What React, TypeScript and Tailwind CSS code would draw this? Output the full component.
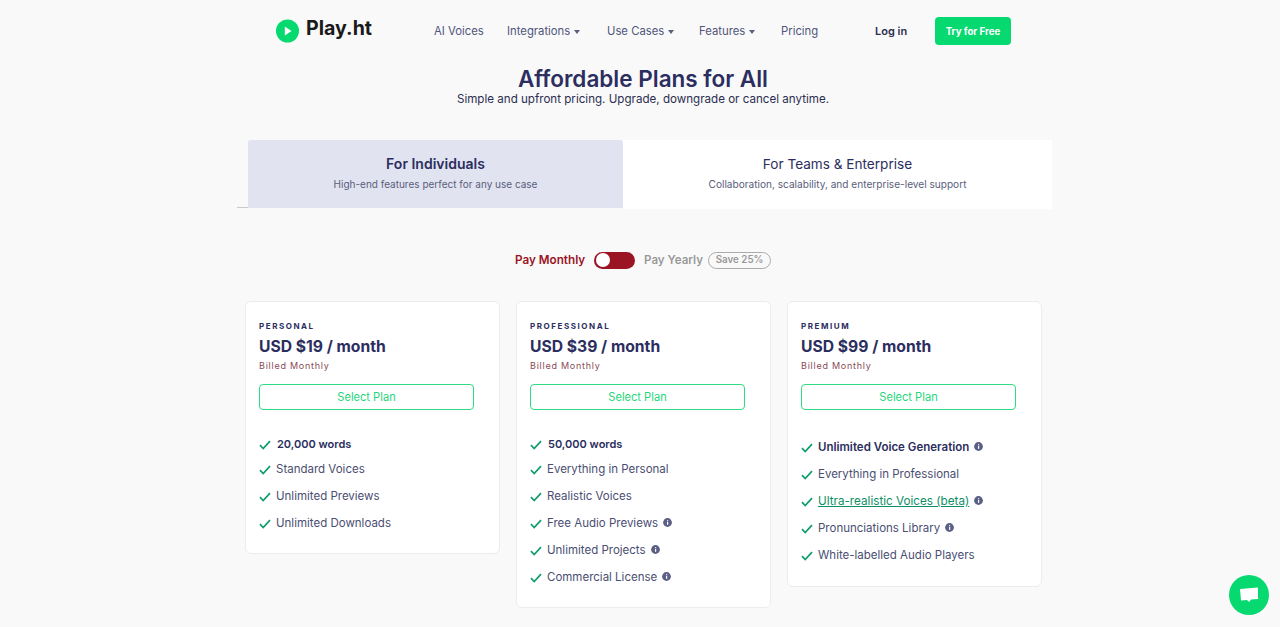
import React from "react";

function Caret() {
  return <span className="ml-[4px] mt-[2px] inline-block h-0 w-0 border-x-[3.5px] border-t-[4px] border-x-transparent border-t-[#5a5f7d]" />;
}

function Check() {
  return (
    <svg width="12" height="10" viewBox="0 0 12 10" fill="none" className="shrink-0">
      <path d="M1 5.2 L4.2 8.6 L11 1.2" stroke="#0f9d6b" strokeWidth="1.7" />
    </svg>
  );
}

function Info() {
  return (
    <svg width="9" height="9" viewBox="0 0 9 9" className="ml-[5px] mb-[2px] shrink-0">
      <circle cx="4.5" cy="4.5" r="4.4" fill="#5b5f85" />
      <rect x="4" y="4" width="1.2" height="2.8" fill="#fff" />
      <rect x="4" y="2.2" width="1.2" height="1.1" fill="#fff" />
    </svg>
  );
}

type Feature = { t: string; bold?: boolean; info?: boolean; link?: boolean; first?: boolean };
type Plan = { name: string; price: string; features: Feature[]; list: string; pad: string };

const plans: Plan[] = [
  {
    name: "PERSONAL",
    price: "USD $19 / month",
    list: "pt-[26px]",
    pad: "pb-[21px]",
    features: [
      { t: "20,000 words", bold: true, first: true },
      { t: "Standard Voices" },
      { t: "Unlimited Previews" },
      { t: "Unlimited Downloads" },
    ],
  },
  {
    name: "PROFESSIONAL",
    price: "USD $39 / month",
    list: "pt-[26px]",
    pad: "pb-[21px]",
    features: [
      { t: "50,000 words", bold: true, first: true },
      { t: "Everything in Personal" },
      { t: "Realistic Voices" },
      { t: "Free Audio Previews", info: true },
      { t: "Unlimited Projects", info: true },
      { t: "Commercial License", info: true },
    ],
  },
  {
    name: "PREMIUM",
    price: "USD $99 / month",
    list: "pt-[29px]",
    pad: "pb-[22px]",
    features: [
      { t: "Unlimited Voice Generation", bold: true, info: true },
      { t: "Everything in Professional" },
      { t: "Ultra-realistic Voices (beta)", info: true, link: true },
      { t: "Pronunciations Library", info: true },
      { t: "White-labelled Audio Players" },
    ],
  },
];

function Card({ plan }: { plan: Plan }) {
  return (
    <div className={`w-[255px] rounded-[6px] border border-[#ececf0] bg-white pl-[13px] pr-[25px] pt-[19px] ${plan.pad}`}>
      <div className="text-[8px] font-bold leading-[10px] tracking-[1.55px] text-[#2b2e5e]">{plan.name}</div>
      <div className="mt-[5px] text-[15.7px] font-bold leading-[22px] text-[#2b2e5e]">{plan.price}</div>
      <div className="mt-[1px] text-[9px] leading-[14px] tracking-[0.75px] text-[#8a4a55]">Billed Monthly</div>
      <div className="mt-[11px] flex h-[26px] w-[215px] items-center justify-center rounded-[4px] border border-[#2fdc85] text-[11.1px] text-[#1fd67c]">
        Select Plan
      </div>
      <ul className={`flex flex-col gap-[10px] ${plan.list}`}>
        {plan.features.map((f) => (
          <li key={f.t} className={f.first ? "-mb-[2px] flex h-[17px] items-center" : "flex h-[17px] items-center"}>
            <Check />
            <span
              className={
                f.first
                  ? "ml-[6px] whitespace-nowrap text-[11px] font-semibold leading-[17px] text-[#2b2e5e]"
                  : f.bold
                  ? "ml-[5px] whitespace-nowrap text-[11.5px] font-semibold leading-[17px] text-[#2b2e5e]"
                  : f.link
                  ? "ml-[5px] whitespace-nowrap text-[11.7px] leading-[17px] text-[#0f8f66] underline"
                  : "ml-[5px] whitespace-nowrap text-[11.5px] leading-[17px] text-[#4a4e72]"
              }
            >
              {f.t}
            </span>
            {f.info && <Info />}
          </li>
        ))}
      </ul>
    </div>
  );
}

export default function App() {
  return (
    <div className="h-[627px] overflow-hidden bg-[#f9f9fa] font-['Inter','Noto_Sans',sans-serif]">
      <nav className="flex h-[62px] items-center pl-[276px]">
        <div className="flex w-[158px] items-center">
          <svg width="24" height="24" viewBox="0 0 24 24" className="shrink-0">
            <circle cx="11.5" cy="12" r="11.5" fill="#05d96f" />
            <path d="M8.8 7.5 L15.5 12 L8.8 16.5 Z" fill="#fff" />
          </svg>
          <span className="mb-[4px] ml-[6px] text-[19.6px] font-bold text-[#1a1a1a]">Play.ht</span>
        </div>
        <div className="flex items-center text-[11.3px] text-[#50557a]">
          <span className="w-[73px]">AI Voices</span>
          <span className="flex w-[100px] items-center">Integrations<Caret /></span>
          <span className="flex w-[92px] items-center">Use Cases<Caret /></span>
          <span className="flex w-[82px] items-center">Features<Caret /></span>
          <span className="w-[94px]">Pricing</span>
        </div>
        <span className="w-[60px] text-[11px] font-semibold text-[#2b2e4f]">Log in</span>
        <div className="flex h-[28px] w-[76px] items-center justify-center rounded-[4px] bg-[#05d96f] pt-[2px] text-[9.7px] font-bold text-white">
          Try for Free
        </div>
      </nav>

      <div className="flex h-[43px] flex-col items-center pl-[6px] pt-[1px]">
        <h1 className="text-[22.5px] font-semibold leading-[31px] text-[#2b2e5e]">Affordable Plans for All</h1>
        <p className="text-[11.6px] leading-[10px] text-[#2b2e4f]">Simple and upfront pricing. Upgrade, downgrade or cancel anytime.</p>
      </div>

      <div className="mt-[35px] flex pl-[237px]">
        <div className="h-[68px] w-[11px] border-b border-[#c9c9cc]" />
        <div className="flex h-[68px] w-[375px] flex-col items-center rounded-t-[3px] bg-[#e1e3f0] pt-[14px]">
          <div className="text-[14px] font-semibold leading-[20px] text-[#2b2e5e]">For Individuals</div>
          <div className="mt-[2px] text-[10px] leading-[16px] text-[#5a5e7c]">High-end features perfect for any use case</div>
        </div>
        <div className="flex h-[69px] w-[429px] flex-col items-center bg-white pt-[14px]">
          <div className="text-[13.6px] leading-[20px] text-[#2b2e5e]">For Teams &amp; Enterprise</div>
          <div className="mt-[2px] text-[10.1px] leading-[16px] text-[#5a5e7c]">Collaboration, scalability, and enterprise-level support</div>
        </div>
      </div>

      <div className="mt-[41px] flex h-[20px] items-center pl-[515px]">
        <span className="w-[79px] whitespace-nowrap pt-[2px] text-[11.7px] font-semibold text-[#9b1424]">Pay Monthly</span>
        <div className="flex h-[17px] w-[41px] items-center rounded-full bg-[#9b1424] pl-[2px]">
          <div className="h-[14px] w-[14px] rounded-full bg-white" />
        </div>
        <span className="ml-[9px] whitespace-nowrap pt-[2px] text-[11.6px] font-semibold text-[#999]">Pay Yearly</span>
        <span className="ml-[5px] flex h-[17px] w-[63px] items-center justify-center rounded-full border border-[#aaa] text-[9.8px] font-semibold text-[#999]">Save 25%</span>
      </div>

      <div className="mt-[31px] flex items-start gap-[16px] pl-[245px]">
        {plans.map((p) => (
          <Card key={p.name} plan={p} />
        ))}
      </div>

      <div className="fixed bottom-[12px] right-[11px] flex h-[40px] w-[40px] items-center justify-center rounded-full bg-[#05d96f]">
        <svg width="20" height="18" viewBox="0 0 20 18">
          <path d="M1 3 L19 1.5 L19 13 L12 13.5 L10 16 L8 14 L2 14.5 Z" fill="#fff" />
        </svg>
      </div>
    </div>
  );
}
